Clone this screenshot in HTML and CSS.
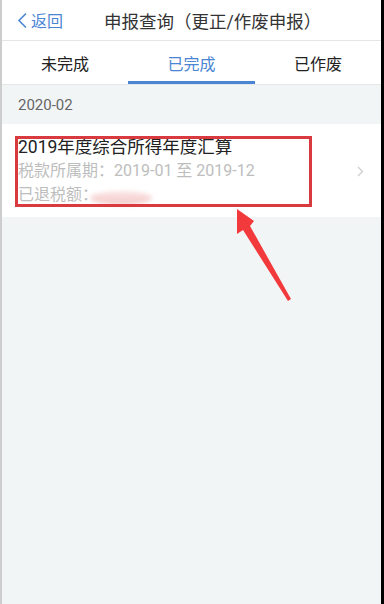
FILE: index.html
```html
<!DOCTYPE html>
<html lang="zh-CN">
<head>
<meta charset="utf-8">
<title>申报查询</title>
<link rel="stylesheet" href="styles.css">
</head>
<body>
<div class="frame">
  <header class="topbar">
    <div class="back">
      <svg class="back-icon" width="11" height="17" viewBox="0 0 11 17"><path d="M9 1.5 L2 8.5 L9 15.5" fill="none" stroke="#4a86d4" stroke-width="1.6"/></svg>
      <span>返回</span>
    </div>
    <div class="title">申报查询（更正/作废申报）</div>
  </header>
  <nav class="tabs">
    <div class="tab">未完成</div>
    <div class="tab active">已完成</div>
    <div class="tab">已作废</div>
  </nav>
  <div class="section">2020-02</div>
  <div class="card">
    <div class="card-body">
      <div class="card-title">2019年度综合所得年度汇算</div>
      <div class="card-line">税款所属期：2019-01 至 2019-12</div>
      <div class="card-line">已退税额：</div>
    </div>
    <svg class="chevron" width="7" height="11" viewBox="0 0 7 11"><path d="M1 1 L5.5 5.5 L1 10" fill="none" stroke="#cfcfcf" stroke-width="1.4"/></svg>
    <span class="smudge"></span>
    <div class="highlight"></div>
  </div>
  <svg class="arrow" width="384" height="604" viewBox="0 0 384 604">
    <polygon points="237,209 237,234 243,230 288,301 291,299 250,226 254,221" fill="#f23a3c"/>
  </svg>
</div>
</body>
</html>
```
FILE: styles.css
```css
html, body {
  margin: 0;
  padding: 0;
}
body {
  width: 384px;
  height: 604px;
  overflow: hidden;
  background: #000;
  font-family: Roboto, "Noto Sans CJK SC", sans-serif;
}
.frame {
  position: relative;
  box-sizing: border-box;
  width: 381px;
  height: 604px;
  border-left: 2px solid #cdcdcd;
  background: #f2f5f6;
  display: flex;
  flex-direction: column;
}
.topbar {
  height: 40px;
  background: #fff;
  border-bottom: 1px solid #e6e6e6;
  display: flex;
  align-items: center;
}
.back {
  display: flex;
  align-items: center;
  gap: 3px;
  padding-left: 15px;
  color: #4a86d4;
  font-size: 16px;
}
.back-icon {
  display: block;
}
.title {
  margin-left: 41px;
  font-size: 17.5px;
  color: #333;
}
.tabs {
  height: 43px;
  background: #fff;
  border-bottom: 1px solid #e6e6e6;
  display: grid;
  grid-template-columns: 126px 127px 1fr;
}
.tab {
  display: flex;
  align-items: center;
  justify-content: center;
  font-size: 16px;
  color: #222;
}
.tab.active {
  color: #4a86d4;
  box-shadow: inset 0 -3px 0 #4a86d4;
}
.section {
  height: 39px;
  display: flex;
  align-items: center;
  padding-left: 16px;
  font-size: 15px;
  color: #666;
}
.card {
  position: relative;
  height: 93px;
  box-sizing: border-box;
  background: #fff;
  padding: 11px 17px 10px 16px;
  display: flex;
  align-items: center;
}
.card-body {
  flex: 1;
}
.card-title {
  font-size: 17.5px;
  line-height: 24px;
  color: #222;
}
.card-line {
  font-size: 16px;
  line-height: 24px;
  color: #bdbdbd;
}
.chevron {
  display: block;
}
.smudge {
  position: absolute;
  left: 88px;
  top: 67px;
  width: 62px;
  height: 14px;
  border-radius: 50%;
  background: linear-gradient(#fbe6e6, #f4c9c9);
  filter: blur(2px);
}
.highlight {
  position: absolute;
  left: 13px;
  top: 12px;
  width: 297px;
  height: 71px;
  box-sizing: border-box;
  border: 3px solid #d83a3f;
}
.arrow {
  position: absolute;
  left: -2px;
  top: 0;
  pointer-events: none;
}
```
